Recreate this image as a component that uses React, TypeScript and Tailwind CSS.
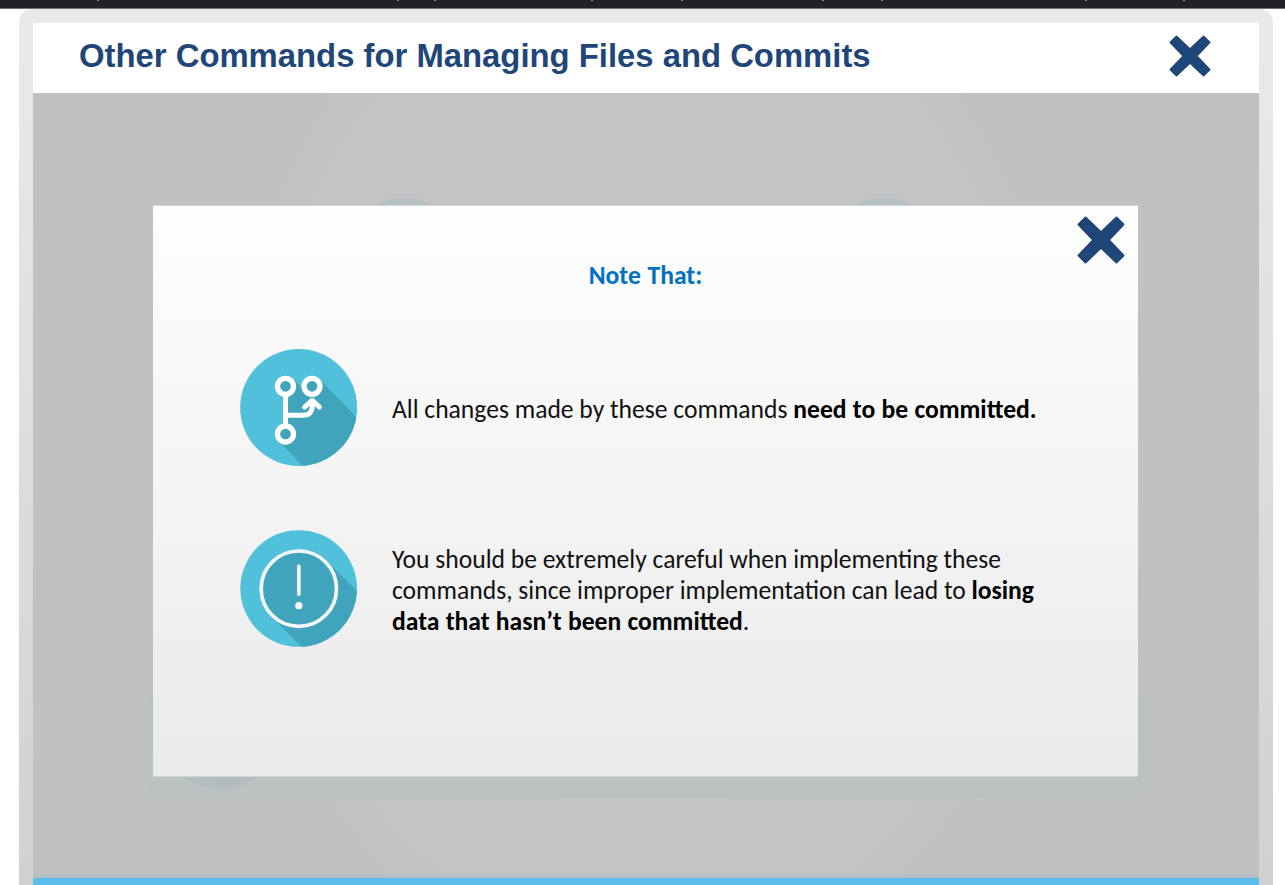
const TEXT_FONT = "font-['Carlito','Lato',sans-serif] text-[25.6px] leading-[31px]";
const STRONG = "text-black [word-spacing:0.5px]";

function CloseIcon({ className }: { className: string }) {
  return (
    <svg viewBox="0 0 124 124" className={className} aria-hidden="true">
      <path
        d="M22 4 L62 42 L102 4 L120 22 L82 62 L120 102 L102 120 L62 82 L22 120 L4 102 L42 62 L4 22 Z"
        fill="#1f4679"
        stroke="#1f4679"
        strokeWidth="5"
        strokeLinejoin="round"
      />
    </svg>
  );
}

function BranchIcon() {
  return (
    <svg viewBox="45 27 351 351" className="h-[117px] w-[117px] shrink-0" aria-hidden="true">
      <defs>
        <clipPath id="branch-disc">
          <circle cx="221" cy="202.500" r="175.500" />
        </clipPath>
      </defs>
      <g clipPath="url(#branch-disc)">
        <rect x="40" y="20" width="360" height="360" fill="#50c0db" />
        <path d="M204 116 L238 150 L283 116 L420 258 L420 400 L255 400 L160 303 L181 225 Z" fill="#40a4bc" />
      </g>
      <g fill="none" stroke="#fff">
        <circle cx="181.500" cy="139" r="24" strokeWidth="16" fill="#40a4bc" />
        <circle cx="261" cy="139" r="24" strokeWidth="16" fill="#40a4bc" />
        <circle cx="181.500" cy="282" r="24" strokeWidth="16" fill="#40a4bc" />
        <path d="M181.500 166 V254 M181.500 226 H236 C252 226 262 216 262 196 V184" strokeWidth="15" />
        <path d="M239 201 L261.500 181 L283 201" strokeWidth="15" strokeLinecap="round" strokeLinejoin="round" />
      </g>
    </svg>
  );
}

function AlertIcon() {
  return (
    <svg viewBox="46 570 351 351" className="h-[117px] w-[117px] shrink-0" aria-hidden="true">
      <defs>
        <clipPath id="alert-disc">
          <circle cx="222" cy="745.500" r="175" />
        </clipPath>
      </defs>
      <g clipPath="url(#alert-disc)">
        <rect x="40" y="560" width="360" height="370" fill="#50c0db" />
        <path d="M306 663 L420 777 L420 940 L250 940 L140 830 Z" fill="#40a4bc" />
      </g>
      <circle cx="222.500" cy="746" r="113" fill="#40a4bc" stroke="#f5f8fb" strokeWidth="11" />
      <path d="M222.500 679 V763" stroke="#f5f8fb" strokeWidth="11" strokeLinecap="round" />
      <circle cx="222.500" cy="797" r="11" fill="#f5f8fb" />
    </svg>
  );
}

function Backdrop() {
  return (
    <svg viewBox="33 93 1226 792" className="absolute inset-0 h-[792px] w-[1226px]" aria-hidden="true">
      <defs>
        <radialGradient id="glow" gradientUnits="userSpaceOnUse" cx="0" cy="0" r="1" gradientTransform="translate(645 450) scale(450 575)">
          <stop offset="0" stopColor="#c4c4c4" />
          <stop offset="0.660" stopColor="#c3c3c3" />
          <stop offset="0.740" stopColor="#c1c3c5" />
          <stop offset="0.860" stopColor="#c1c3c4" />
          <stop offset="0.920" stopColor="#c1c3c2" />
          <stop offset="0.970" stopColor="#c0c2c1" />
          <stop offset="1" stopColor="#c0c1c3" />
        </radialGradient>
      </defs>
      <rect x="33" y="93" width="1226" height="792" fill="#c0c1c3" />
      <rect x="33" y="93" width="1226" height="792" fill="url(#glow)" />
      <circle cx="405" cy="256" r="58" fill="#b5c0c3" />
      <circle cx="884" cy="256" r="58" fill="#b5c0c3" />
      <rect x="144.500" y="692" width="1003.500" height="106" rx="14" fill="#bbc0c1" />
      <circle cx="221" cy="731.500" r="58" fill="#b3bec2" />
      <path d="M208 776 L221 789.500 A58 58 0 0 0 252 776 Z" fill="#b1bbbd" />
    </svg>
  );
}

const MARKS = [97, 397, 434, 591, 681, 822, 881, 1085, 1183];

export default function App() {
  return (
    <div className="flex h-[885px] w-[1285px] flex-col overflow-hidden bg-white">
      <div className="h-[9px] shrink-0 border-b border-[#6d6f72] bg-[#202124]">
        <svg viewBox="0 0 1285 1" className="block h-px w-[1285px]" aria-hidden="true">
          {MARKS.map((x) => (
            <rect key={x} x={x} y="0" width="2" height="1" fill="#8f9086" />
          ))}
        </svg>
      </div>
      <div className="ml-[19px] flex h-[900px] w-[1254px] shrink-0 flex-col rounded-t-[13px] bg-linear-to-b from-[#e9e9e9] from-5% to-[#d0d0d0] px-[14px] pt-[14px]">
        <header className="flex h-[70px] w-[1226px] shrink-0 items-start justify-between bg-white pr-12 pl-[46px]">
          <h1 className="mt-[14px] font-['Liberation_Sans',Arial,sans-serif] text-[32.83px] leading-[37px] font-bold whitespace-nowrap text-[#1f4679]">
            Other Commands for Managing Files and Commits
          </h1>
          <button type="button" aria-label="Close page" className="mt-3">
            <CloseIcon className="h-[42px] w-[42px]" />
          </button>
        </header>
        <main className="relative h-[792px] w-[1226px] shrink-0">
          <Backdrop />
          <div className="relative flex h-[792px] flex-col">
            <section className="mt-[112px] ml-[120px] flex h-[572px] w-[985px] shrink-0 flex-col border-y border-[#d3d4d4] bg-linear-to-b from-[#fefefe] to-[#eaeaea]">
              <div className="flex h-[58px] justify-end pt-[10px] pr-[13px]">
                <button type="button" aria-label="Close note" className="h-12">
                  <CloseIcon className="h-12 w-12" />
                </button>
              </div>
              <h2 className={`${TEXT_FONT} mt-[-4px] text-center font-bold text-[#0070c0] [word-spacing:1px]`}>Note That:</h2>
              <div className="mt-[58px] ml-[87px] flex items-center gap-[35px]">
                <BranchIcon />
                <p className={`${TEXT_FONT} pt-[3px] whitespace-nowrap text-[#111]`}>
                  All changes made by these commands <b className={STRONG}>need to be committed.</b>
                </p>
              </div>
              <div className="mt-16 ml-[87px] flex items-center gap-[35px]">
                <AlertIcon />
                <p className={`${TEXT_FONT} pt-[3px] whitespace-nowrap text-[#111]`}>
                  You should be extremely careful when implementing these
                  <br />
                  commands, since improper implementation can lead to <b className={STRONG}>losing</b>
                  <br />
                  <b className={STRONG}>data that hasn’t been committed</b>.
                </p>
              </div>
            </section>
            <div className="mt-[97px] h-1 shrink-0 bg-[#b4bec5]" />
            <div className="h-[7px] shrink-0 bg-[#5bbeea]" />
          </div>
        </main>
      </div>
    </div>
  );
}
